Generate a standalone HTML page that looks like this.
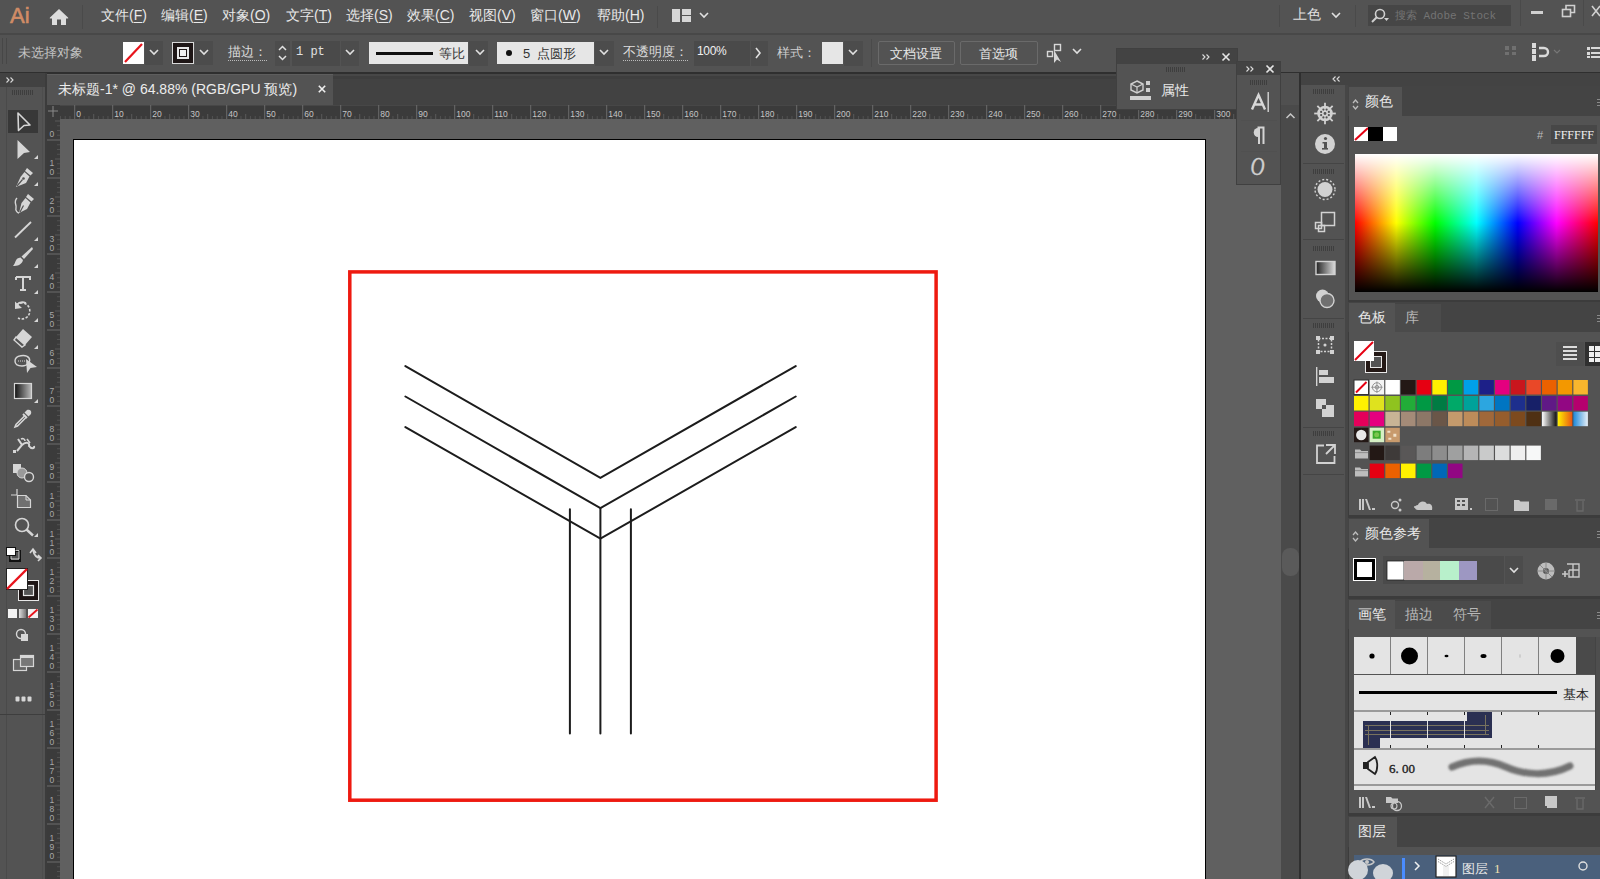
<!DOCTYPE html>
<html><head><meta charset="utf-8">
<style>
*{box-sizing:border-box;margin:0;padding:0}
html,body{width:1600px;height:879px;overflow:hidden;background:#535353;font-family:"Liberation Sans",sans-serif;color:#e6e6e6}
.a{position:absolute}
#menubar{left:0;top:0;width:1600px;height:33px;background:#535353}
.mi{position:absolute;top:7px;font-size:14px;color:#e8e8e8;white-space:nowrap}
.mi u{text-decoration:underline;text-underline-offset:2px;text-decoration-thickness:1px}
#ctrl{left:0;top:33px;width:1600px;height:41px;background:#535353;border-bottom:2px solid #2f2f2f}
#tools{left:0;top:73px;width:47px;height:806px;background:#535353;border-right:2px solid #3c3c3c}
#tabbar{left:47px;top:74px;width:1234px;height:31px;background:#424242;border-top:2px solid #474747;box-shadow:inset 0 3px 0 #3e3e3e}
#tab{left:47px;top:74px;width:286px;height:31px;background:#535353;border-top:1px solid #5e5e5e}
#hruler{left:47px;top:105px;width:1234px;height:14px;background:#3c3c3c}
#vruler{left:47px;top:105px;width:13px;height:774px;background:#3c3c3c}
#canvas{left:60px;top:119px;width:1221px;height:760px;background:#606060}
#artboard{left:73px;top:139px;width:1133px;height:740px;background:#fff;border:1px solid #000;border-bottom:none}
#vscroll{left:1281px;top:105px;width:19px;height:774px;background:#4a4a4a;border-right:1px solid #333}
#iconstrip{left:1301px;top:73px;width:45px;height:806px;background:#535353}
#rpanel{left:1348px;top:73px;width:252px;height:806px;background:#535353;border-left:1px solid #3a3a3a}
</style></head><body>
<div id="menubar" class="a">
  <div class="a" style="left:10px;top:3px;font-size:22px;color:#d08c66;-webkit-text-stroke:0.6px #d08c66;letter-spacing:0px">Ai</div>
  <div class="mi" style="left:101px">文件(<u>F</u>)</div>
  <div class="mi" style="left:161px">编辑(<u>E</u>)</div>
  <div class="mi" style="left:222px">对象(<u>O</u>)</div>
  <div class="mi" style="left:286px">文字(<u>T</u>)</div>
  <div class="mi" style="left:346px">选择(<u>S</u>)</div>
  <div class="mi" style="left:407px">效果(<u>C</u>)</div>
  <div class="mi" style="left:469px">视图(<u>V</u>)</div>
  <div class="mi" style="left:530px">窗口(<u>W</u>)</div>
  <div class="mi" style="left:597px">帮助(<u>H</u>)</div>

  <div class="a" style="left:48px;top:8px;width:22px;height:18px">
    <svg width="22" height="18" viewBox="0 0 22 18"><path d="M11 1 L2 9.5 Q1 10.5 2.5 10.5 H4 V17 H9 V11.5 H13 V17 H18 V10.5 H19.5 Q21 10.5 20 9.5 Z" fill="#dcdcdc"/></svg>
  </div>
  <div class="a" style="left:82px;top:5px;width:1px;height:24px;background:#4a4a4a"></div>
  <div class="a" style="left:657px;top:6px;width:1px;height:22px;background:#4a4a4a"></div>
  <div class="a" style="left:672px;top:9px;width:8px;height:13px;background:#d6d6d6"></div>
  <div class="a" style="left:682px;top:9px;width:9px;height:6px;background:#d6d6d6"></div>
  <div class="a" style="left:682px;top:16px;width:9px;height:6px;background:#d6d6d6"></div>
  <svg class="a" style="left:698px;top:11px" width="12" height="9" viewBox="0 0 12 9"><path d="M2 2 L6 6 L10 2" stroke="#e0e0e0" stroke-width="1.6" fill="none"/></svg>
  <div class="a" style="left:1279px;top:5px;width:1px;height:22px;background:#4a4a4a"></div>
  <div class="mi" style="left:1293px;top:6px;color:#e0e0e0">上色</div>
  <svg class="a" style="left:1330px;top:11px" width="12" height="9" viewBox="0 0 12 9"><path d="M2 2 L6 6 L10 2" stroke="#e0e0e0" stroke-width="1.6" fill="none"/></svg>
  <div class="a" style="left:1355px;top:5px;width:1px;height:22px;background:#4a4a4a"></div>
  <div class="a" style="left:1368px;top:5px;width:143px;height:21px;background:#464646"></div>
  <svg class="a" style="left:1370px;top:7px" width="22" height="17" viewBox="0 0 22 17"><circle cx="10" cy="7" r="4.5" stroke="#d0d0d0" stroke-width="1.6" fill="none"/><path d="M7 10 L2 15" stroke="#d0d0d0" stroke-width="2"/><path d="M14 11 L19 11 L16.5 14 Z" fill="#d0d0d0"/></svg>
  <div class="a" style="left:1395px;top:8px;font-size:11px;color:#747474;font-family:'Liberation Mono',monospace;white-space:nowrap">搜索 Adobe Stock</div>
  <div class="a" style="left:1520px;top:0px;width:1px;height:26px;background:#4a4a4a"></div>
  <div class="a" style="left:1531px;top:11px;width:12px;height:3px;background:#d0d0d0"></div>
  <svg class="a" style="left:1561px;top:4px" width="16" height="14" viewBox="0 0 16 14"><rect x="1.5" y="5.5" width="8" height="7" stroke="#d0d0d0" stroke-width="1.6" fill="none"/><path d="M5 5 V1.5 H13.5 V8.5 H10" stroke="#d0d0d0" stroke-width="1.6" fill="none"/></svg>
  <div class="a" style="left:1583px;top:0px;width:1px;height:26px;background:#4a4a4a"></div>
  <svg class="a" style="left:1591px;top:5px" width="10" height="12" viewBox="0 0 10 12"><path d="M1 1 L9 11 M9 1 L1 11" stroke="#d0d0d0" stroke-width="1.6"/></svg>
</div>
<div id="ctrl" class="a">
  <div class="a" style="left:2px;top:5px;width:1px;height:26px;background:#474747"></div>
  <div class="a" style="left:6px;top:5px;width:1px;height:26px;background:#474747"></div>
  <div class="a" style="left:18px;top:11px;font-size:13px;color:#c4c4c4;white-space:nowrap">未选择对象</div>
  <div class="a" style="left:123px;top:9px;width:21px;height:22px;background:#fff;overflow:hidden"><svg width="21" height="22"><path d="M2 20 L19 2" stroke="#e8141c" stroke-width="2.2"/></svg></div>
  <div class="a" style="left:145px;top:8px;width:18px;height:24px;background:#4c4c4c"></div>
  <svg class="a" style="left:148px;top:15px" width="12" height="9" viewBox="0 0 12 9"><path d="M2 2 L6 6 L10 2" stroke="#e0e0e0" stroke-width="1.6" fill="none"/></svg>
  <div class="a" style="left:172px;top:9px;width:22px;height:22px;background:#1e1616;border:1px solid #d8d8d8"></div>
  <div class="a" style="left:177px;top:14px;width:12px;height:12px;border:2px solid #e8e8e8;background:#1e1616"></div>
  <div class="a" style="left:180px;top:17px;width:6px;height:6px;background:#f0f0f0"></div>
  <div class="a" style="left:195px;top:8px;width:18px;height:24px;background:#4c4c4c"></div>
  <svg class="a" style="left:198px;top:15px" width="12" height="9" viewBox="0 0 12 9"><path d="M2 2 L6 6 L10 2" stroke="#e0e0e0" stroke-width="1.6" fill="none"/></svg>
  <div class="a" style="left:228px;top:11px;font-size:13px;color:#dcdcdc;white-space:nowrap;border-bottom:1px dotted #bbb;line-height:16px">描边：</div>
  <div class="a" style="left:275px;top:8px;width:15px;height:25px;background:#4c4c4c"></div>
  <svg class="a" style="left:276px;top:9px" width="13" height="22" viewBox="0 0 13 22"><path d="M3 8 L6.5 4.5 L10 8 M3 14 L6.5 17.5 L10 14" stroke="#e0e0e0" stroke-width="1.5" fill="none"/></svg>
  <div class="a" style="left:292px;top:8px;width:48px;height:25px;background:#4a4a4a"></div>
  <div class="a" style="left:296px;top:12px;font-size:12px;color:#e0e0e0;font-family:'Liberation Mono',monospace;white-space:nowrap">1 pt</div>
  <div class="a" style="left:341px;top:8px;width:18px;height:25px;background:#4c4c4c"></div>
  <svg class="a" style="left:344px;top:15px" width="12" height="9" viewBox="0 0 12 9"><path d="M2 2 L6 6 L10 2" stroke="#e0e0e0" stroke-width="1.6" fill="none"/></svg>
  <div class="a" style="left:369px;top:9px;width:99px;height:22px;background:#e6e6e6"></div>
  <div class="a" style="left:376px;top:19px;width:57px;height:3px;background:#111"></div>
  <div class="a" style="left:439px;top:12px;font-size:13px;color:#333;white-space:nowrap">等比</div>
  <div class="a" style="left:469px;top:8px;width:19px;height:25px;background:#4c4c4c"></div>
  <svg class="a" style="left:474px;top:15px" width="12" height="9" viewBox="0 0 12 9"><path d="M2 2 L6 6 L10 2" stroke="#e0e0e0" stroke-width="1.6" fill="none"/></svg>
  <div class="a" style="left:497px;top:9px;width:97px;height:22px;background:#e6e6e6"></div>
  <div class="a" style="left:506px;top:17px;width:6px;height:6px;border-radius:50%;background:#111"></div>
  <div class="a" style="left:523px;top:12px;font-size:13px;color:#333;white-space:nowrap">5&nbsp; 点圆形</div>
  <div class="a" style="left:595px;top:8px;width:19px;height:25px;background:#4c4c4c"></div>
  <svg class="a" style="left:598px;top:15px" width="12" height="9" viewBox="0 0 12 9"><path d="M2 2 L6 6 L10 2" stroke="#e0e0e0" stroke-width="1.6" fill="none"/></svg>
  <div class="a" style="left:623px;top:11px;font-size:13px;color:#dcdcdc;white-space:nowrap;border-bottom:1px dotted #bbb;line-height:16px">不透明度：</div>
  <div class="a" style="left:694px;top:8px;width:56px;height:25px;background:#4a4a4a"></div>
  <div class="a" style="left:697px;top:11px;font-size:12px;color:#f0f0f0;white-space:nowrap;letter-spacing:-0.3px">100%</div>
  <div class="a" style="left:751px;top:8px;width:17px;height:25px;background:#4c4c4c"></div>
  <svg class="a" style="left:754px;top:13px" width="9" height="14" viewBox="0 0 9 14"><path d="M2 2 L6 7 L2 12" stroke="#e0e0e0" stroke-width="1.6" fill="none"/></svg>
  <div class="a" style="left:777px;top:11px;font-size:13px;color:#d0d0d0;white-space:nowrap">样式：</div>
  <div class="a" style="left:822px;top:9px;width:21px;height:22px;background:#e6e6e6"></div>
  <div class="a" style="left:844px;top:8px;width:19px;height:25px;background:#4c4c4c"></div>
  <svg class="a" style="left:847px;top:15px" width="12" height="9" viewBox="0 0 12 9"><path d="M2 2 L6 6 L10 2" stroke="#e0e0e0" stroke-width="1.6" fill="none"/></svg>
  <div class="a" style="left:871px;top:6px;width:1px;height:28px;background:#4a4a4a"></div>
  <div class="a" style="left:878px;top:8px;width:77px;height:24px;border:1px solid #6a6a6a;border-radius:2px"></div>
  <div class="a" style="left:890px;top:12px;font-size:13px;color:#e6e6e6;white-space:nowrap">文档设置</div>
  <div class="a" style="left:960px;top:8px;width:78px;height:24px;border:1px solid #6a6a6a;border-radius:2px"></div>
  <div class="a" style="left:979px;top:12px;font-size:13px;color:#e6e6e6;white-space:nowrap">首选项</div>
  <svg class="a" style="left:1046px;top:9px" width="24" height="22" viewBox="0 0 24 22"><rect x="1.5" y="9.5" width="5" height="5" stroke="#d8d8d8" stroke-width="1.4" fill="none"/><rect x="8.5" y="2.5" width="6" height="6" stroke="#d8d8d8" stroke-width="1.4" fill="none"/><path d="M8 8 L8 21 L11 17.5 L15 20 Z" fill="#d8d8d8"/></svg>
  <svg class="a" style="left:1071px;top:14px" width="12" height="9" viewBox="0 0 12 9"><path d="M2 2 L6 6 L10 2" stroke="#e0e0e0" stroke-width="1.6" fill="none"/></svg>
  <svg class="a" style="left:1503px;top:9px" width="16" height="20" viewBox="0 0 16 20"><g fill="#707070"><rect x="2" y="4" width="4" height="4"/><rect x="9" y="4" width="4" height="4"/><rect x="2" y="10" width="4" height="3"/><rect x="9" y="10" width="4" height="3"/></g></svg>
  <svg class="a" style="left:1527px;top:8px" width="40" height="24" viewBox="0 0 40 24"><g fill="#dadada"><rect x="5" y="2" width="4" height="5"/><rect x="5" y="8" width="4" height="5"/><rect x="5" y="14" width="4" height="6"/></g><path d="M12 7 H17 A4 4 0 0 1 17 15 H12" stroke="#dadada" stroke-width="2.4" fill="none"/><path d="M27 9 L30 12 L33 9" stroke="#777" stroke-width="1.2" fill="none"/></svg>
  <svg class="a" style="left:1584px;top:10px" width="16" height="18" viewBox="0 0 16 18"><g fill="#dadada"><rect x="3" y="4" width="3" height="3"/><rect x="3" y="9" width="3" height="3"/><rect x="3" y="13" width="3" height="2"/><rect x="7" y="4" width="9" height="2"/><rect x="7" y="9" width="9" height="2"/><rect x="7" y="13" width="9" height="2"/></g></svg>
</div>
<div class="a" style="left:0;top:33px;width:1600px;height:2px;background:#484848;z-index:2"></div>
<div id="tools" class="a">
<svg width="47" height="806" viewBox="0 73 47 806" style="position:absolute;left:0;top:0">
  <rect x="0" y="73" width="45" height="14" fill="#424242"/>
  <path d="M6.5 77.5 L9 80 L6.5 82.5 M10.5 77.5 L13 80 L10.5 82.5" stroke="#d8d8d8" stroke-width="1.1" fill="none"/>
  <rect x="6" y="87" width="1" height="792" fill="#4a4a4a"/><rect x="42" y="87" width="1" height="792" fill="#4d4d4d"/>
  <g fill="#3e3e3e"><rect x="12" y="90" width="1" height="5"/><rect x="14" y="90" width="1" height="5"/><rect x="16" y="90" width="1" height="5"/><rect x="18" y="90" width="1" height="5"/><rect x="20" y="90" width="1" height="5"/><rect x="22" y="90" width="1" height="5"/><rect x="24" y="90" width="1" height="5"/><rect x="26" y="90" width="1" height="5"/><rect x="28" y="90" width="1" height="5"/><rect x="30" y="90" width="1" height="5"/><rect x="32" y="90" width="1" height="5"/></g>
  <rect x="0" y="714" width="45" height="1" fill="#3e3e3e"/>
  <rect x="8" y="110" width="30" height="23" fill="#383838"/>
  <path d="M18 113 L30 125 L24 125.5 L18.5 130.5 Z" stroke="#d6d6d6" stroke-width="1.6" fill="none" stroke-linejoin="round"/>
  <path d="M17.5 140 L30 152 L24 153 L17.5 159 Z" fill="#d6d6d6"/><path d="M38 155 L38 159 L34 159 Z" fill="#d6d6d6"/>
  <g transform="translate(14,167)"><path d="M13 1 L19 6 L16.5 8.5 L11 4 Z" fill="#d6d6d6"/><path d="M10.5 5 L15.5 9.5 L12 16 L2 20 L6.5 10 Z" fill="#d6d6d6"/><path d="M3 19 L8.5 12.5" stroke="#535353" stroke-width="1.2"/><circle cx="9.5" cy="11.5" r="1.3" fill="#535353"/></g><path d="M38 182 L38 186 L34 186 Z" fill="#d6d6d6"/>
  <g transform="translate(15,193)"><path d="M13 1 L19 6 L16.5 8.5 L11 4 Z" fill="#d6d6d6"/><path d="M10.5 5 L15.5 9.5 L12 16 L4 20 L6.5 10 Z" fill="#d6d6d6"/><path d="M5 19 L8.5 12.5" stroke="#535353" stroke-width="1.2"/><path d="M2 5 C-2 9 2 12 1 15 C0 18 3 20 4 20" stroke="#d6d6d6" stroke-width="1.4" fill="none"/></g>
  <path d="M15 237.5 L31 222" stroke="#d6d6d6" stroke-width="1.8"/><path d="M38 237 L38 241 L34 241 Z" fill="#d6d6d6"/>
  <g transform="translate(13,246)"><path d="M19 1 L20 3 L11 13 L8.5 10.5 Z" fill="#d6d6d6"/><path d="M7.5 11.5 L10 14 C9 19 4 20 0 20 C3 17 2 12 7.5 11.5 Z" fill="#d6d6d6"/></g><path d="M38 264 L38 268 L34 268 Z" fill="#d6d6d6"/>
  <path d="M16 277 H30 V280 M16 277 V280 M23 277 V290 M20 290 H26" stroke="#d6d6d6" stroke-width="2" fill="none"/><path d="M38 290 L38 294 L34 294 Z" fill="#d6d6d6"/>
  <path d="M16.5 305 A8 8 0 1 1 18 318" stroke="#d6d6d6" stroke-width="1.6" fill="none" stroke-dasharray="2.5 1.5"/><path d="M15 301.5 L15 309 L22 308 Z" fill="#d6d6d6"/><path d="M16.5 305 A8 8 0 0 1 26 303" stroke="#d6d6d6" stroke-width="1.8" fill="none"/><path d="M38 318 L38 322 L34 322 Z" fill="#d6d6d6"/>
  <g transform="translate(13,328)"><path d="M10 1 L19 9 L12 17 L3 9 Z" fill="#d6d6d6"/><path d="M3 9 L12 17 L9 19 L1 12 Z" stroke="#d6d6d6" stroke-width="1.4" fill="none"/></g><path d="M38 345 L38 349 L34 349 Z" fill="#d6d6d6"/>
  <g transform="translate(13,354)"><path d="M2 7 C2 1 13 0 16 4 C18 7 15 12 9 12 C4 12 2 10 2 7 Z" stroke="#d6d6d6" stroke-width="1.4" fill="none"/><path d="M5 7 H13" stroke="#d6d6d6" stroke-width="1" stroke-dasharray="1 1"/><path d="M13 5 L24 13 L17.5 14 L14 19 Z" fill="#d6d6d6"/></g>
  <defs><linearGradient id="tg" x1="0" x2="1" y1="0" y2="0"><stop offset="0" stop-color="#111"/><stop offset="1" stop-color="#bbb"/></linearGradient></defs>
  <rect x="14.5" y="383.5" width="17" height="15" fill="url(#tg)" stroke="#d6d6d6" stroke-width="1.2"/><path d="M38 399 L38 403 L34 403 Z" fill="#d6d6d6"/>
  <g transform="translate(13,409)"><path d="M14 1 C17 0 19 2 18 5 L15.5 7.5 L11.5 3.5 Z" fill="#d6d6d6"/><path d="M10 5 L14 9" stroke="#d6d6d6" stroke-width="2"/><path d="M11.5 7 L3 15.5 L2 18 L4.5 17 L13 8.5" stroke="#d6d6d6" stroke-width="1.5" fill="none"/></g>
  <g transform="translate(12,437)"><path d="M6 2 L10 8 L5 14 M10 8 C14 4 18 6 17 9 C19 12 23 12 22 9" stroke="#d6d6d6" stroke-width="2" fill="none"/><path d="M9 2 C11 1 13 2 13 4" stroke="#d6d6d6" stroke-width="1.6" fill="none"/><path d="M15 2 L18 6" stroke="#d6d6d6" stroke-width="1.6"/><rect x="1" y="13" width="3" height="3" fill="#d6d6d6"/></g>
  <g transform="translate(12,463)"><rect x="1" y="1" width="8" height="9" fill="#d6d6d6"/><circle cx="10" cy="10" r="5" fill="#9a9a9a" stroke="#d6d6d6" stroke-width="1"/><circle cx="17" cy="14" r="4.5" fill="#535353" stroke="#d6d6d6" stroke-width="1.4"/></g>
  <g transform="translate(10,489)"><path d="M7 0 V6 M1 6 H7" stroke="#d6d6d6" stroke-width="1.2"/><path d="M7.5 6.5 H16 L20.5 11 V18.5 H7.5 Z" fill="#707070" stroke="#d6d6d6" stroke-width="1.2"/><path d="M16 6.5 V11 H20.5" fill="none" stroke="#d6d6d6" stroke-width="1"/></g>
  <g transform="translate(14,517)"><circle cx="8" cy="8" r="6.5" stroke="#d6d6d6" stroke-width="1.6" fill="none"/><path d="M12.5 12.5 L19 18.5" stroke="#d6d6d6" stroke-width="2.4"/></g><path d="M38 533 L38 537 L34 537 Z" fill="#d6d6d6"/>
  <rect x="6.5" y="547.5" width="9" height="8" fill="#fff" stroke="#111" stroke-width="1"/>
  <path d="M16 551 H20 V561 H10 V556" stroke="#111" stroke-width="2" fill="none"/><path d="M15.5 550.5 H19 V559 H11 V556" stroke="#eee" stroke-width="0.8" fill="none"/>
  <path d="M30 553 L33 549 L36 553 M33 550 C34 556 37 558 41 558 M38 555 L41 558 L38 561" stroke="#d6d6d6" stroke-width="1.6" fill="none"/>
  <rect x="18.5" y="580.5" width="20" height="20" fill="#1c1414" stroke="#e8e8e8" stroke-width="1"/>
  <rect x="23.5" y="585.5" width="10" height="10" fill="#555" stroke="#e8e8e8" stroke-width="1.2"/>
  <rect x="6" y="568" width="22" height="22" fill="#fff"/><rect x="6.5" y="568.5" width="21" height="21" fill="none" stroke="#222" stroke-width="1"/>
  <path d="M7 589 L27 569" stroke="#e8141c" stroke-width="2.4"/>
  <rect x="8" y="609" width="9" height="9" fill="#f2f2f2"/>
  <defs><linearGradient id="tg2" x1="0" x2="1"><stop offset="0" stop-color="#ddd"/><stop offset="1" stop-color="#777"/></linearGradient></defs>
  <rect x="19" y="609" width="7" height="9" fill="url(#tg2)"/>
  <rect x="28" y="609" width="10" height="9" fill="#f2f2f2"/><path d="M28.5 617.5 L37.5 609.5" stroke="#e8141c" stroke-width="1.8"/>
  <g transform="translate(16,629)"><circle cx="5" cy="5" r="4.5" fill="none" stroke="#d6d6d6" stroke-width="1.4"/><rect x="5" y="5" width="7" height="7" fill="#d6d6d6"/></g>
  <g transform="translate(13,655)"><rect x="0.5" y="4.5" width="13" height="11" fill="#666" stroke="#d6d6d6" stroke-width="1.2"/><rect x="7.5" y="0.5" width="13" height="11" fill="#777" stroke="#d6d6d6" stroke-width="1.2"/><rect x="8" y="1" width="12" height="2" fill="#d6d6d6"/></g>
  <g fill="#d6d6d6"><rect x="15.5" y="696.5" width="4" height="5" rx="1"/><rect x="21.5" y="696.5" width="4" height="5" rx="1"/><rect x="27.5" y="696.5" width="4" height="5" rx="1"/></g>
</svg></div>
<div id="tabbar" class="a"></div>
<div id="tab" class="a">
  <div class="a" style="left:11px;top:6px;font-size:14px;color:#ececec;white-space:nowrap">未标题-1* @ 64.88% (RGB/GPU 预览)</div>
  <svg class="a" style="left:271px;top:10px" width="8" height="8" viewBox="0 0 8 8"><path d="M0.8 0.8 L7.2 7.2 M7.2 0.8 L0.8 7.2" stroke="#f0f0f0" stroke-width="1.6"/></svg>
</div>
<svg class="a" style="left:47px;top:105px" width="1234" height="14"><rect width="1234" height="14" fill="#3b3b3b"/><rect x="0" y="0" width="1234" height="1" fill="#474747"/><rect x="12.95" y="11" width="1" height="3" fill="#525252"/><rect x="17.70" y="11" width="1" height="3" fill="#525252"/><rect x="22.45" y="11" width="1" height="3" fill="#525252"/><rect x="27.20" y="0" width="1" height="14" fill="#6c6c6c"/><rect x="31.95" y="11" width="1" height="3" fill="#525252"/><rect x="36.70" y="11" width="1" height="3" fill="#525252"/><rect x="41.45" y="11" width="1" height="3" fill="#525252"/><rect x="46.20" y="9" width="1" height="5" fill="#5a5a5a"/><rect x="50.95" y="11" width="1" height="3" fill="#525252"/><rect x="55.70" y="11" width="1" height="3" fill="#525252"/><rect x="60.45" y="11" width="1" height="3" fill="#525252"/><rect x="65.20" y="0" width="1" height="14" fill="#6c6c6c"/><rect x="69.95" y="11" width="1" height="3" fill="#525252"/><rect x="74.70" y="11" width="1" height="3" fill="#525252"/><rect x="79.45" y="11" width="1" height="3" fill="#525252"/><rect x="84.20" y="9" width="1" height="5" fill="#5a5a5a"/><rect x="88.95" y="11" width="1" height="3" fill="#525252"/><rect x="93.70" y="11" width="1" height="3" fill="#525252"/><rect x="98.45" y="11" width="1" height="3" fill="#525252"/><rect x="103.20" y="0" width="1" height="14" fill="#6c6c6c"/><rect x="107.95" y="11" width="1" height="3" fill="#525252"/><rect x="112.70" y="11" width="1" height="3" fill="#525252"/><rect x="117.45" y="11" width="1" height="3" fill="#525252"/><rect x="122.20" y="9" width="1" height="5" fill="#5a5a5a"/><rect x="126.95" y="11" width="1" height="3" fill="#525252"/><rect x="131.70" y="11" width="1" height="3" fill="#525252"/><rect x="136.45" y="11" width="1" height="3" fill="#525252"/><rect x="141.20" y="0" width="1" height="14" fill="#6c6c6c"/><rect x="145.95" y="11" width="1" height="3" fill="#525252"/><rect x="150.70" y="11" width="1" height="3" fill="#525252"/><rect x="155.45" y="11" width="1" height="3" fill="#525252"/><rect x="160.20" y="9" width="1" height="5" fill="#5a5a5a"/><rect x="164.95" y="11" width="1" height="3" fill="#525252"/><rect x="169.70" y="11" width="1" height="3" fill="#525252"/><rect x="174.45" y="11" width="1" height="3" fill="#525252"/><rect x="179.20" y="0" width="1" height="14" fill="#6c6c6c"/><rect x="183.95" y="11" width="1" height="3" fill="#525252"/><rect x="188.70" y="11" width="1" height="3" fill="#525252"/><rect x="193.45" y="11" width="1" height="3" fill="#525252"/><rect x="198.20" y="9" width="1" height="5" fill="#5a5a5a"/><rect x="202.95" y="11" width="1" height="3" fill="#525252"/><rect x="207.70" y="11" width="1" height="3" fill="#525252"/><rect x="212.45" y="11" width="1" height="3" fill="#525252"/><rect x="217.20" y="0" width="1" height="14" fill="#6c6c6c"/><rect x="221.95" y="11" width="1" height="3" fill="#525252"/><rect x="226.70" y="11" width="1" height="3" fill="#525252"/><rect x="231.45" y="11" width="1" height="3" fill="#525252"/><rect x="236.20" y="9" width="1" height="5" fill="#5a5a5a"/><rect x="240.95" y="11" width="1" height="3" fill="#525252"/><rect x="245.70" y="11" width="1" height="3" fill="#525252"/><rect x="250.45" y="11" width="1" height="3" fill="#525252"/><rect x="255.20" y="0" width="1" height="14" fill="#6c6c6c"/><rect x="259.95" y="11" width="1" height="3" fill="#525252"/><rect x="264.70" y="11" width="1" height="3" fill="#525252"/><rect x="269.45" y="11" width="1" height="3" fill="#525252"/><rect x="274.20" y="9" width="1" height="5" fill="#5a5a5a"/><rect x="278.95" y="11" width="1" height="3" fill="#525252"/><rect x="283.70" y="11" width="1" height="3" fill="#525252"/><rect x="288.45" y="11" width="1" height="3" fill="#525252"/><rect x="293.20" y="0" width="1" height="14" fill="#6c6c6c"/><rect x="297.95" y="11" width="1" height="3" fill="#525252"/><rect x="302.70" y="11" width="1" height="3" fill="#525252"/><rect x="307.45" y="11" width="1" height="3" fill="#525252"/><rect x="312.20" y="9" width="1" height="5" fill="#5a5a5a"/><rect x="316.95" y="11" width="1" height="3" fill="#525252"/><rect x="321.70" y="11" width="1" height="3" fill="#525252"/><rect x="326.45" y="11" width="1" height="3" fill="#525252"/><rect x="331.20" y="0" width="1" height="14" fill="#6c6c6c"/><rect x="335.95" y="11" width="1" height="3" fill="#525252"/><rect x="340.70" y="11" width="1" height="3" fill="#525252"/><rect x="345.45" y="11" width="1" height="3" fill="#525252"/><rect x="350.20" y="9" width="1" height="5" fill="#5a5a5a"/><rect x="354.95" y="11" width="1" height="3" fill="#525252"/><rect x="359.70" y="11" width="1" height="3" fill="#525252"/><rect x="364.45" y="11" width="1" height="3" fill="#525252"/><rect x="369.20" y="0" width="1" height="14" fill="#6c6c6c"/><rect x="373.95" y="11" width="1" height="3" fill="#525252"/><rect x="378.70" y="11" width="1" height="3" fill="#525252"/><rect x="383.45" y="11" width="1" height="3" fill="#525252"/><rect x="388.20" y="9" width="1" height="5" fill="#5a5a5a"/><rect x="392.95" y="11" width="1" height="3" fill="#525252"/><rect x="397.70" y="11" width="1" height="3" fill="#525252"/><rect x="402.45" y="11" width="1" height="3" fill="#525252"/><rect x="407.20" y="0" width="1" height="14" fill="#6c6c6c"/><rect x="411.95" y="11" width="1" height="3" fill="#525252"/><rect x="416.70" y="11" width="1" height="3" fill="#525252"/><rect x="421.45" y="11" width="1" height="3" fill="#525252"/><rect x="426.20" y="9" width="1" height="5" fill="#5a5a5a"/><rect x="430.95" y="11" width="1" height="3" fill="#525252"/><rect x="435.70" y="11" width="1" height="3" fill="#525252"/><rect x="440.45" y="11" width="1" height="3" fill="#525252"/><rect x="445.20" y="0" width="1" height="14" fill="#6c6c6c"/><rect x="449.95" y="11" width="1" height="3" fill="#525252"/><rect x="454.70" y="11" width="1" height="3" fill="#525252"/><rect x="459.45" y="11" width="1" height="3" fill="#525252"/><rect x="464.20" y="9" width="1" height="5" fill="#5a5a5a"/><rect x="468.95" y="11" width="1" height="3" fill="#525252"/><rect x="473.70" y="11" width="1" height="3" fill="#525252"/><rect x="478.45" y="11" width="1" height="3" fill="#525252"/><rect x="483.20" y="0" width="1" height="14" fill="#6c6c6c"/><rect x="487.95" y="11" width="1" height="3" fill="#525252"/><rect x="492.70" y="11" width="1" height="3" fill="#525252"/><rect x="497.45" y="11" width="1" height="3" fill="#525252"/><rect x="502.20" y="9" width="1" height="5" fill="#5a5a5a"/><rect x="506.95" y="11" width="1" height="3" fill="#525252"/><rect x="511.70" y="11" width="1" height="3" fill="#525252"/><rect x="516.45" y="11" width="1" height="3" fill="#525252"/><rect x="521.20" y="0" width="1" height="14" fill="#6c6c6c"/><rect x="525.95" y="11" width="1" height="3" fill="#525252"/><rect x="530.70" y="11" width="1" height="3" fill="#525252"/><rect x="535.45" y="11" width="1" height="3" fill="#525252"/><rect x="540.20" y="9" width="1" height="5" fill="#5a5a5a"/><rect x="544.95" y="11" width="1" height="3" fill="#525252"/><rect x="549.70" y="11" width="1" height="3" fill="#525252"/><rect x="554.45" y="11" width="1" height="3" fill="#525252"/><rect x="559.20" y="0" width="1" height="14" fill="#6c6c6c"/><rect x="563.95" y="11" width="1" height="3" fill="#525252"/><rect x="568.70" y="11" width="1" height="3" fill="#525252"/><rect x="573.45" y="11" width="1" height="3" fill="#525252"/><rect x="578.20" y="9" width="1" height="5" fill="#5a5a5a"/><rect x="582.95" y="11" width="1" height="3" fill="#525252"/><rect x="587.70" y="11" width="1" height="3" fill="#525252"/><rect x="592.45" y="11" width="1" height="3" fill="#525252"/><rect x="597.20" y="0" width="1" height="14" fill="#6c6c6c"/><rect x="601.95" y="11" width="1" height="3" fill="#525252"/><rect x="606.70" y="11" width="1" height="3" fill="#525252"/><rect x="611.45" y="11" width="1" height="3" fill="#525252"/><rect x="616.20" y="9" width="1" height="5" fill="#5a5a5a"/><rect x="620.95" y="11" width="1" height="3" fill="#525252"/><rect x="625.70" y="11" width="1" height="3" fill="#525252"/><rect x="630.45" y="11" width="1" height="3" fill="#525252"/><rect x="635.20" y="0" width="1" height="14" fill="#6c6c6c"/><rect x="639.95" y="11" width="1" height="3" fill="#525252"/><rect x="644.70" y="11" width="1" height="3" fill="#525252"/><rect x="649.45" y="11" width="1" height="3" fill="#525252"/><rect x="654.20" y="9" width="1" height="5" fill="#5a5a5a"/><rect x="658.95" y="11" width="1" height="3" fill="#525252"/><rect x="663.70" y="11" width="1" height="3" fill="#525252"/><rect x="668.45" y="11" width="1" height="3" fill="#525252"/><rect x="673.20" y="0" width="1" height="14" fill="#6c6c6c"/><rect x="677.95" y="11" width="1" height="3" fill="#525252"/><rect x="682.70" y="11" width="1" height="3" fill="#525252"/><rect x="687.45" y="11" width="1" height="3" fill="#525252"/><rect x="692.20" y="9" width="1" height="5" fill="#5a5a5a"/><rect x="696.95" y="11" width="1" height="3" fill="#525252"/><rect x="701.70" y="11" width="1" height="3" fill="#525252"/><rect x="706.45" y="11" width="1" height="3" fill="#525252"/><rect x="711.20" y="0" width="1" height="14" fill="#6c6c6c"/><rect x="715.95" y="11" width="1" height="3" fill="#525252"/><rect x="720.70" y="11" width="1" height="3" fill="#525252"/><rect x="725.45" y="11" width="1" height="3" fill="#525252"/><rect x="730.20" y="9" width="1" height="5" fill="#5a5a5a"/><rect x="734.95" y="11" width="1" height="3" fill="#525252"/><rect x="739.70" y="11" width="1" height="3" fill="#525252"/><rect x="744.45" y="11" width="1" height="3" fill="#525252"/><rect x="749.20" y="0" width="1" height="14" fill="#6c6c6c"/><rect x="753.95" y="11" width="1" height="3" fill="#525252"/><rect x="758.70" y="11" width="1" height="3" fill="#525252"/><rect x="763.45" y="11" width="1" height="3" fill="#525252"/><rect x="768.20" y="9" width="1" height="5" fill="#5a5a5a"/><rect x="772.95" y="11" width="1" height="3" fill="#525252"/><rect x="777.70" y="11" width="1" height="3" fill="#525252"/><rect x="782.45" y="11" width="1" height="3" fill="#525252"/><rect x="787.20" y="0" width="1" height="14" fill="#6c6c6c"/><rect x="791.95" y="11" width="1" height="3" fill="#525252"/><rect x="796.70" y="11" width="1" height="3" fill="#525252"/><rect x="801.45" y="11" width="1" height="3" fill="#525252"/><rect x="806.20" y="9" width="1" height="5" fill="#5a5a5a"/><rect x="810.95" y="11" width="1" height="3" fill="#525252"/><rect x="815.70" y="11" width="1" height="3" fill="#525252"/><rect x="820.45" y="11" width="1" height="3" fill="#525252"/><rect x="825.20" y="0" width="1" height="14" fill="#6c6c6c"/><rect x="829.95" y="11" width="1" height="3" fill="#525252"/><rect x="834.70" y="11" width="1" height="3" fill="#525252"/><rect x="839.45" y="11" width="1" height="3" fill="#525252"/><rect x="844.20" y="9" width="1" height="5" fill="#5a5a5a"/><rect x="848.95" y="11" width="1" height="3" fill="#525252"/><rect x="853.70" y="11" width="1" height="3" fill="#525252"/><rect x="858.45" y="11" width="1" height="3" fill="#525252"/><rect x="863.20" y="0" width="1" height="14" fill="#6c6c6c"/><rect x="867.95" y="11" width="1" height="3" fill="#525252"/><rect x="872.70" y="11" width="1" height="3" fill="#525252"/><rect x="877.45" y="11" width="1" height="3" fill="#525252"/><rect x="882.20" y="9" width="1" height="5" fill="#5a5a5a"/><rect x="886.95" y="11" width="1" height="3" fill="#525252"/><rect x="891.70" y="11" width="1" height="3" fill="#525252"/><rect x="896.45" y="11" width="1" height="3" fill="#525252"/><rect x="901.20" y="0" width="1" height="14" fill="#6c6c6c"/><rect x="905.95" y="11" width="1" height="3" fill="#525252"/><rect x="910.70" y="11" width="1" height="3" fill="#525252"/><rect x="915.45" y="11" width="1" height="3" fill="#525252"/><rect x="920.20" y="9" width="1" height="5" fill="#5a5a5a"/><rect x="924.95" y="11" width="1" height="3" fill="#525252"/><rect x="929.70" y="11" width="1" height="3" fill="#525252"/><rect x="934.45" y="11" width="1" height="3" fill="#525252"/><rect x="939.20" y="0" width="1" height="14" fill="#6c6c6c"/><rect x="943.95" y="11" width="1" height="3" fill="#525252"/><rect x="948.70" y="11" width="1" height="3" fill="#525252"/><rect x="953.45" y="11" width="1" height="3" fill="#525252"/><rect x="958.20" y="9" width="1" height="5" fill="#5a5a5a"/><rect x="962.95" y="11" width="1" height="3" fill="#525252"/><rect x="967.70" y="11" width="1" height="3" fill="#525252"/><rect x="972.45" y="11" width="1" height="3" fill="#525252"/><rect x="977.20" y="0" width="1" height="14" fill="#6c6c6c"/><rect x="981.95" y="11" width="1" height="3" fill="#525252"/><rect x="986.70" y="11" width="1" height="3" fill="#525252"/><rect x="991.45" y="11" width="1" height="3" fill="#525252"/><rect x="996.20" y="9" width="1" height="5" fill="#5a5a5a"/><rect x="1000.95" y="11" width="1" height="3" fill="#525252"/><rect x="1005.70" y="11" width="1" height="3" fill="#525252"/><rect x="1010.45" y="11" width="1" height="3" fill="#525252"/><rect x="1015.20" y="0" width="1" height="14" fill="#6c6c6c"/><rect x="1019.95" y="11" width="1" height="3" fill="#525252"/><rect x="1024.70" y="11" width="1" height="3" fill="#525252"/><rect x="1029.45" y="11" width="1" height="3" fill="#525252"/><rect x="1034.20" y="9" width="1" height="5" fill="#5a5a5a"/><rect x="1038.95" y="11" width="1" height="3" fill="#525252"/><rect x="1043.70" y="11" width="1" height="3" fill="#525252"/><rect x="1048.45" y="11" width="1" height="3" fill="#525252"/><rect x="1053.20" y="0" width="1" height="14" fill="#6c6c6c"/><rect x="1057.95" y="11" width="1" height="3" fill="#525252"/><rect x="1062.70" y="11" width="1" height="3" fill="#525252"/><rect x="1067.45" y="11" width="1" height="3" fill="#525252"/><rect x="1072.20" y="9" width="1" height="5" fill="#5a5a5a"/><rect x="1076.95" y="11" width="1" height="3" fill="#525252"/><rect x="1081.70" y="11" width="1" height="3" fill="#525252"/><rect x="1086.45" y="11" width="1" height="3" fill="#525252"/><rect x="1091.20" y="0" width="1" height="14" fill="#6c6c6c"/><rect x="1095.95" y="11" width="1" height="3" fill="#525252"/><rect x="1100.70" y="11" width="1" height="3" fill="#525252"/><rect x="1105.45" y="11" width="1" height="3" fill="#525252"/><rect x="1110.20" y="9" width="1" height="5" fill="#5a5a5a"/><rect x="1114.95" y="11" width="1" height="3" fill="#525252"/><rect x="1119.70" y="11" width="1" height="3" fill="#525252"/><rect x="1124.45" y="11" width="1" height="3" fill="#525252"/><rect x="1129.20" y="0" width="1" height="14" fill="#6c6c6c"/><rect x="1133.95" y="11" width="1" height="3" fill="#525252"/><rect x="1138.70" y="11" width="1" height="3" fill="#525252"/><rect x="1143.45" y="11" width="1" height="3" fill="#525252"/><rect x="1148.20" y="9" width="1" height="5" fill="#5a5a5a"/><rect x="1152.95" y="11" width="1" height="3" fill="#525252"/><rect x="1157.70" y="11" width="1" height="3" fill="#525252"/><rect x="1162.45" y="11" width="1" height="3" fill="#525252"/><rect x="1167.20" y="0" width="1" height="14" fill="#6c6c6c"/><rect x="1171.95" y="11" width="1" height="3" fill="#525252"/><rect x="1176.70" y="11" width="1" height="3" fill="#525252"/><rect x="1181.45" y="11" width="1" height="3" fill="#525252"/><rect x="1186.20" y="9" width="1" height="5" fill="#5a5a5a"/><rect x="1190.95" y="11" width="1" height="3" fill="#525252"/><rect x="1195.70" y="11" width="1" height="3" fill="#525252"/><rect x="1200.45" y="11" width="1" height="3" fill="#525252"/><rect x="1205.20" y="0" width="1" height="14" fill="#6c6c6c"/><rect x="1209.95" y="11" width="1" height="3" fill="#525252"/><rect x="1214.70" y="11" width="1" height="3" fill="#525252"/><rect x="1219.45" y="11" width="1" height="3" fill="#525252"/><rect x="1224.20" y="9" width="1" height="5" fill="#5a5a5a"/><rect x="1228.95" y="11" width="1" height="3" fill="#525252"/><rect x="1233.70" y="11" width="1" height="3" fill="#525252"/><g font-family="Liberation Sans, sans-serif" font-size="8.5" fill="#c4c4c4"><text x="29.20" y="12">0</text><text x="67.20" y="12">10</text><text x="105.20" y="12">20</text><text x="143.20" y="12">30</text><text x="181.20" y="12">40</text><text x="219.20" y="12">50</text><text x="257.20" y="12">60</text><text x="295.20" y="12">70</text><text x="333.20" y="12">80</text><text x="371.20" y="12">90</text><text x="409.20" y="12">100</text><text x="447.20" y="12">110</text><text x="485.20" y="12">120</text><text x="523.20" y="12">130</text><text x="561.20" y="12">140</text><text x="599.20" y="12">150</text><text x="637.20" y="12">160</text><text x="675.20" y="12">170</text><text x="713.20" y="12">180</text><text x="751.20" y="12">190</text><text x="789.20" y="12">200</text><text x="827.20" y="12">210</text><text x="865.20" y="12">220</text><text x="903.20" y="12">230</text><text x="941.20" y="12">240</text><text x="979.20" y="12">250</text><text x="1017.20" y="12">260</text><text x="1055.20" y="12">270</text><text x="1093.20" y="12">280</text><text x="1131.20" y="12">290</text><text x="1169.20" y="12">300</text><text x="1207.20" y="12">310</text></g></svg>
<svg class="a" style="left:47px;top:105px" width="13" height="774"><rect width="13" height="774" fill="#3b3b3b"/><rect x="8" y="15.50" width="5" height="1" fill="#5a5a5a"/><rect x="10" y="20.25" width="3" height="1" fill="#525252"/><rect x="10" y="25.00" width="3" height="1" fill="#525252"/><rect x="10" y="29.75" width="3" height="1" fill="#525252"/><rect x="0" y="34.50" width="13" height="1" fill="#6c6c6c"/><rect x="10" y="39.25" width="3" height="1" fill="#525252"/><rect x="10" y="44.00" width="3" height="1" fill="#525252"/><rect x="10" y="48.75" width="3" height="1" fill="#525252"/><rect x="8" y="53.50" width="5" height="1" fill="#5a5a5a"/><rect x="10" y="58.25" width="3" height="1" fill="#525252"/><rect x="10" y="63.00" width="3" height="1" fill="#525252"/><rect x="10" y="67.75" width="3" height="1" fill="#525252"/><rect x="0" y="72.50" width="13" height="1" fill="#6c6c6c"/><rect x="10" y="77.25" width="3" height="1" fill="#525252"/><rect x="10" y="82.00" width="3" height="1" fill="#525252"/><rect x="10" y="86.75" width="3" height="1" fill="#525252"/><rect x="8" y="91.50" width="5" height="1" fill="#5a5a5a"/><rect x="10" y="96.25" width="3" height="1" fill="#525252"/><rect x="10" y="101.00" width="3" height="1" fill="#525252"/><rect x="10" y="105.75" width="3" height="1" fill="#525252"/><rect x="0" y="110.50" width="13" height="1" fill="#6c6c6c"/><rect x="10" y="115.25" width="3" height="1" fill="#525252"/><rect x="10" y="120.00" width="3" height="1" fill="#525252"/><rect x="10" y="124.75" width="3" height="1" fill="#525252"/><rect x="8" y="129.50" width="5" height="1" fill="#5a5a5a"/><rect x="10" y="134.25" width="3" height="1" fill="#525252"/><rect x="10" y="139.00" width="3" height="1" fill="#525252"/><rect x="10" y="143.75" width="3" height="1" fill="#525252"/><rect x="0" y="148.50" width="13" height="1" fill="#6c6c6c"/><rect x="10" y="153.25" width="3" height="1" fill="#525252"/><rect x="10" y="158.00" width="3" height="1" fill="#525252"/><rect x="10" y="162.75" width="3" height="1" fill="#525252"/><rect x="8" y="167.50" width="5" height="1" fill="#5a5a5a"/><rect x="10" y="172.25" width="3" height="1" fill="#525252"/><rect x="10" y="177.00" width="3" height="1" fill="#525252"/><rect x="10" y="181.75" width="3" height="1" fill="#525252"/><rect x="0" y="186.50" width="13" height="1" fill="#6c6c6c"/><rect x="10" y="191.25" width="3" height="1" fill="#525252"/><rect x="10" y="196.00" width="3" height="1" fill="#525252"/><rect x="10" y="200.75" width="3" height="1" fill="#525252"/><rect x="8" y="205.50" width="5" height="1" fill="#5a5a5a"/><rect x="10" y="210.25" width="3" height="1" fill="#525252"/><rect x="10" y="215.00" width="3" height="1" fill="#525252"/><rect x="10" y="219.75" width="3" height="1" fill="#525252"/><rect x="0" y="224.50" width="13" height="1" fill="#6c6c6c"/><rect x="10" y="229.25" width="3" height="1" fill="#525252"/><rect x="10" y="234.00" width="3" height="1" fill="#525252"/><rect x="10" y="238.75" width="3" height="1" fill="#525252"/><rect x="8" y="243.50" width="5" height="1" fill="#5a5a5a"/><rect x="10" y="248.25" width="3" height="1" fill="#525252"/><rect x="10" y="253.00" width="3" height="1" fill="#525252"/><rect x="10" y="257.75" width="3" height="1" fill="#525252"/><rect x="0" y="262.50" width="13" height="1" fill="#6c6c6c"/><rect x="10" y="267.25" width="3" height="1" fill="#525252"/><rect x="10" y="272.00" width="3" height="1" fill="#525252"/><rect x="10" y="276.75" width="3" height="1" fill="#525252"/><rect x="8" y="281.50" width="5" height="1" fill="#5a5a5a"/><rect x="10" y="286.25" width="3" height="1" fill="#525252"/><rect x="10" y="291.00" width="3" height="1" fill="#525252"/><rect x="10" y="295.75" width="3" height="1" fill="#525252"/><rect x="0" y="300.50" width="13" height="1" fill="#6c6c6c"/><rect x="10" y="305.25" width="3" height="1" fill="#525252"/><rect x="10" y="310.00" width="3" height="1" fill="#525252"/><rect x="10" y="314.75" width="3" height="1" fill="#525252"/><rect x="8" y="319.50" width="5" height="1" fill="#5a5a5a"/><rect x="10" y="324.25" width="3" height="1" fill="#525252"/><rect x="10" y="329.00" width="3" height="1" fill="#525252"/><rect x="10" y="333.75" width="3" height="1" fill="#525252"/><rect x="0" y="338.50" width="13" height="1" fill="#6c6c6c"/><rect x="10" y="343.25" width="3" height="1" fill="#525252"/><rect x="10" y="348.00" width="3" height="1" fill="#525252"/><rect x="10" y="352.75" width="3" height="1" fill="#525252"/><rect x="8" y="357.50" width="5" height="1" fill="#5a5a5a"/><rect x="10" y="362.25" width="3" height="1" fill="#525252"/><rect x="10" y="367.00" width="3" height="1" fill="#525252"/><rect x="10" y="371.75" width="3" height="1" fill="#525252"/><rect x="0" y="376.50" width="13" height="1" fill="#6c6c6c"/><rect x="10" y="381.25" width="3" height="1" fill="#525252"/><rect x="10" y="386.00" width="3" height="1" fill="#525252"/><rect x="10" y="390.75" width="3" height="1" fill="#525252"/><rect x="8" y="395.50" width="5" height="1" fill="#5a5a5a"/><rect x="10" y="400.25" width="3" height="1" fill="#525252"/><rect x="10" y="405.00" width="3" height="1" fill="#525252"/><rect x="10" y="409.75" width="3" height="1" fill="#525252"/><rect x="0" y="414.50" width="13" height="1" fill="#6c6c6c"/><rect x="10" y="419.25" width="3" height="1" fill="#525252"/><rect x="10" y="424.00" width="3" height="1" fill="#525252"/><rect x="10" y="428.75" width="3" height="1" fill="#525252"/><rect x="8" y="433.50" width="5" height="1" fill="#5a5a5a"/><rect x="10" y="438.25" width="3" height="1" fill="#525252"/><rect x="10" y="443.00" width="3" height="1" fill="#525252"/><rect x="10" y="447.75" width="3" height="1" fill="#525252"/><rect x="0" y="452.50" width="13" height="1" fill="#6c6c6c"/><rect x="10" y="457.25" width="3" height="1" fill="#525252"/><rect x="10" y="462.00" width="3" height="1" fill="#525252"/><rect x="10" y="466.75" width="3" height="1" fill="#525252"/><rect x="8" y="471.50" width="5" height="1" fill="#5a5a5a"/><rect x="10" y="476.25" width="3" height="1" fill="#525252"/><rect x="10" y="481.00" width="3" height="1" fill="#525252"/><rect x="10" y="485.75" width="3" height="1" fill="#525252"/><rect x="0" y="490.50" width="13" height="1" fill="#6c6c6c"/><rect x="10" y="495.25" width="3" height="1" fill="#525252"/><rect x="10" y="500.00" width="3" height="1" fill="#525252"/><rect x="10" y="504.75" width="3" height="1" fill="#525252"/><rect x="8" y="509.50" width="5" height="1" fill="#5a5a5a"/><rect x="10" y="514.25" width="3" height="1" fill="#525252"/><rect x="10" y="519.00" width="3" height="1" fill="#525252"/><rect x="10" y="523.75" width="3" height="1" fill="#525252"/><rect x="0" y="528.50" width="13" height="1" fill="#6c6c6c"/><rect x="10" y="533.25" width="3" height="1" fill="#525252"/><rect x="10" y="538.00" width="3" height="1" fill="#525252"/><rect x="10" y="542.75" width="3" height="1" fill="#525252"/><rect x="8" y="547.50" width="5" height="1" fill="#5a5a5a"/><rect x="10" y="552.25" width="3" height="1" fill="#525252"/><rect x="10" y="557.00" width="3" height="1" fill="#525252"/><rect x="10" y="561.75" width="3" height="1" fill="#525252"/><rect x="0" y="566.50" width="13" height="1" fill="#6c6c6c"/><rect x="10" y="571.25" width="3" height="1" fill="#525252"/><rect x="10" y="576.00" width="3" height="1" fill="#525252"/><rect x="10" y="580.75" width="3" height="1" fill="#525252"/><rect x="8" y="585.50" width="5" height="1" fill="#5a5a5a"/><rect x="10" y="590.25" width="3" height="1" fill="#525252"/><rect x="10" y="595.00" width="3" height="1" fill="#525252"/><rect x="10" y="599.75" width="3" height="1" fill="#525252"/><rect x="0" y="604.50" width="13" height="1" fill="#6c6c6c"/><rect x="10" y="609.25" width="3" height="1" fill="#525252"/><rect x="10" y="614.00" width="3" height="1" fill="#525252"/><rect x="10" y="618.75" width="3" height="1" fill="#525252"/><rect x="8" y="623.50" width="5" height="1" fill="#5a5a5a"/><rect x="10" y="628.25" width="3" height="1" fill="#525252"/><rect x="10" y="633.00" width="3" height="1" fill="#525252"/><rect x="10" y="637.75" width="3" height="1" fill="#525252"/><rect x="0" y="642.50" width="13" height="1" fill="#6c6c6c"/><rect x="10" y="647.25" width="3" height="1" fill="#525252"/><rect x="10" y="652.00" width="3" height="1" fill="#525252"/><rect x="10" y="656.75" width="3" height="1" fill="#525252"/><rect x="8" y="661.50" width="5" height="1" fill="#5a5a5a"/><rect x="10" y="666.25" width="3" height="1" fill="#525252"/><rect x="10" y="671.00" width="3" height="1" fill="#525252"/><rect x="10" y="675.75" width="3" height="1" fill="#525252"/><rect x="0" y="680.50" width="13" height="1" fill="#6c6c6c"/><rect x="10" y="685.25" width="3" height="1" fill="#525252"/><rect x="10" y="690.00" width="3" height="1" fill="#525252"/><rect x="10" y="694.75" width="3" height="1" fill="#525252"/><rect x="8" y="699.50" width="5" height="1" fill="#5a5a5a"/><rect x="10" y="704.25" width="3" height="1" fill="#525252"/><rect x="10" y="709.00" width="3" height="1" fill="#525252"/><rect x="10" y="713.75" width="3" height="1" fill="#525252"/><rect x="0" y="718.50" width="13" height="1" fill="#6c6c6c"/><rect x="10" y="723.25" width="3" height="1" fill="#525252"/><rect x="10" y="728.00" width="3" height="1" fill="#525252"/><rect x="10" y="732.75" width="3" height="1" fill="#525252"/><rect x="8" y="737.50" width="5" height="1" fill="#5a5a5a"/><rect x="10" y="742.25" width="3" height="1" fill="#525252"/><rect x="10" y="747.00" width="3" height="1" fill="#525252"/><rect x="10" y="751.75" width="3" height="1" fill="#525252"/><rect x="0" y="756.50" width="13" height="1" fill="#6c6c6c"/><rect x="10" y="761.25" width="3" height="1" fill="#525252"/><rect x="10" y="766.00" width="3" height="1" fill="#525252"/><rect x="10" y="770.75" width="3" height="1" fill="#525252"/><g font-family="Liberation Sans, sans-serif" font-size="8.5" fill="#a8a8a8"><text x="2.5" y="32.00">0</text><text x="2.5" y="61.00">1</text><text x="2.5" y="70.00">0</text><text x="2.5" y="99.00">2</text><text x="2.5" y="108.00">0</text><text x="2.5" y="137.00">3</text><text x="2.5" y="146.00">0</text><text x="2.5" y="175.00">4</text><text x="2.5" y="184.00">0</text><text x="2.5" y="213.00">5</text><text x="2.5" y="222.00">0</text><text x="2.5" y="251.00">6</text><text x="2.5" y="260.00">0</text><text x="2.5" y="289.00">7</text><text x="2.5" y="298.00">0</text><text x="2.5" y="327.00">8</text><text x="2.5" y="336.00">0</text><text x="2.5" y="365.00">9</text><text x="2.5" y="374.00">0</text><text x="2.5" y="394.00">1</text><text x="2.5" y="403.00">0</text><text x="2.5" y="412.00">0</text><text x="2.5" y="432.00">1</text><text x="2.5" y="441.00">1</text><text x="2.5" y="450.00">0</text><text x="2.5" y="470.00">1</text><text x="2.5" y="479.00">2</text><text x="2.5" y="488.00">0</text><text x="2.5" y="508.00">1</text><text x="2.5" y="517.00">3</text><text x="2.5" y="526.00">0</text><text x="2.5" y="546.00">1</text><text x="2.5" y="555.00">4</text><text x="2.5" y="564.00">0</text><text x="2.5" y="584.00">1</text><text x="2.5" y="593.00">5</text><text x="2.5" y="602.00">0</text><text x="2.5" y="622.00">1</text><text x="2.5" y="631.00">6</text><text x="2.5" y="640.00">0</text><text x="2.5" y="660.00">1</text><text x="2.5" y="669.00">7</text><text x="2.5" y="678.00">0</text><text x="2.5" y="698.00">1</text><text x="2.5" y="707.00">8</text><text x="2.5" y="716.00">0</text><text x="2.5" y="736.00">1</text><text x="2.5" y="745.00">9</text><text x="2.5" y="754.00">0</text></g><path d="M1 6 H11 M6 1 V12" stroke="#8a8a8a" stroke-width="1"/></svg>
<div id="canvas" class="a"></div>
<div id="artboard" class="a"></div>
<svg class="a" style="left:0;top:0" width="1600" height="879">
  <rect x="349.8" y="271.9" width="586.3" height="528.3" fill="none" stroke="#ee1a10" stroke-width="3.5"/>
  <g stroke="#1c1c1c" stroke-width="2" fill="none" stroke-linecap="round">
    <path d="M405.4 366.1 L600.4 477.9 L795.7 366.1"/>
    <path d="M405.4 396.5 L600.4 508.2 L795.7 396.5"/>
    <path d="M405.4 427.1 L600.4 538.7 L795.7 427.1"/>
    <path d="M569.9 509.2 V733.5 M600.4 508.2 V733.5 M630.9 509.2 V733.5"/>
  </g>
</svg>

<div class="a" style="left:1281px;top:73px;width:20px;height:806px;background:#4a4a4a"></div>
<div class="a" style="left:1281px;top:73px;width:20px;height:32px;background:#505050"></div>
<div class="a" style="left:1299px;top:73px;width:2px;height:806px;background:#2f2f2f"></div>
<svg class="a" style="left:1284px;top:111px" width="13" height="9" viewBox="0 0 13 9"><path d="M2.5 7 L6.5 3 L10.5 7" stroke="#c8c8c8" stroke-width="1.5" fill="none"/></svg>
<div class="a" style="left:1282px;top:548px;width:17px;height:28px;background:#5a5a5a;border-radius:8px"></div>

<div class="a" style="left:1117px;top:49px;width:120px;height:60px;background:#535353;box-shadow:0 0 0 1px #404040">
  <div class="a" style="left:0;top:0;width:120px;height:15px;background:#434343"></div>
  <svg class="a" style="left:0;top:0" width="120" height="60">
    <path d="M85.5 5.5 L88 8 L85.5 10.5 M89.5 5.5 L92 8 L89.5 10.5" stroke="#dcdcdc" stroke-width="1.1" fill="none"/>
    <path d="M105.5 4.5 L112.5 11.5 M112.5 4.5 L105.5 11.5" stroke="#e6e6e6" stroke-width="1.6"/>
    <g fill="#3e3e3e"><rect x="49" y="18" width="1" height="5"/><rect x="51" y="18" width="1" height="5"/><rect x="53" y="18" width="1" height="5"/><rect x="55" y="18" width="1" height="5"/><rect x="57" y="18" width="1" height="5"/><rect x="59" y="18" width="1" height="5"/><rect x="61" y="18" width="1" height="5"/><rect x="63" y="18" width="1" height="5"/><rect x="65" y="18" width="1" height="5"/><rect x="67" y="18" width="1" height="5"/></g>
    <g transform="translate(13,31)">
      <path d="M7 1 L13 4 L13 10 L7 13 L1 10 L1 4 Z" fill="none" stroke="#cfcfcf" stroke-width="1.4"/>
      <path d="M1 4 L7 7 L13 4 M7 7 V13" fill="none" stroke="#cfcfcf" stroke-width="1.2"/>
      <rect x="16" y="1" width="4" height="4" fill="#cfcfcf"/><rect x="16" y="8" width="4" height="4" fill="#cfcfcf"/>
      <rect x="0" y="16" width="21" height="4" fill="#cfcfcf"/>
    </g>
  </svg>
  <div class="a" style="left:44px;top:33px;font-size:14px;color:#e8e8e8;white-space:nowrap">属性</div>
</div>
<div class="a" style="left:1237px;top:62px;width:43px;height:122px;background:#535353;box-shadow:0 0 0 1px #404040">
  <div class="a" style="left:0;top:0;width:43px;height:13px;background:#434343"></div>
  <svg class="a" style="left:0;top:0" width="44" height="122">
    <path d="M9.5 4.5 L12 7 L9.5 9.5 M13.5 4.5 L16 7 L13.5 9.5" stroke="#dcdcdc" stroke-width="1.1" fill="none"/>
    <path d="M29.5 3.5 L36.5 10.5 M36.5 3.5 L29.5 10.5" stroke="#e6e6e6" stroke-width="1.6"/>
    <g fill="#3e3e3e"><rect x="13" y="18" width="1" height="5"/><rect x="15" y="18" width="1" height="5"/><rect x="17" y="18" width="1" height="5"/><rect x="19" y="18" width="1" height="5"/><rect x="21" y="18" width="1" height="5"/><rect x="23" y="18" width="1" height="5"/><rect x="25" y="18" width="1" height="5"/><rect x="27" y="18" width="1" height="5"/><rect x="29" y="18" width="1" height="5"/></g>
    <path d="M15 47.5 L21.5 33 L28 47.5 M17.5 42.5 H25.5" stroke="#d8d8d8" stroke-width="2.4" fill="none"/>
    <rect x="30.5" y="30" width="1.4" height="20" fill="#d4d4d4"/>
    <rect x="4" y="58" width="36" height="1" fill="#505050"/>
    <path d="M20.5 65.5 H27.5 M22 66 V82 M26.5 66 V82" stroke="#d4d4d4" stroke-width="2" fill="none"/>
    <path d="M21 66 A4.3 4.5 0 0 0 21 75 Z" fill="#d4d4d4"/>
    <rect x="4" y="89" width="36" height="1" fill="#505050"/>
    <text transform="translate(13.5,113) scale(0.78,1)" font-family="Liberation Serif, serif" font-style="italic" font-size="25" fill="#cfcfcf" stroke="#cfcfcf" stroke-width="0.4">O</text>
  </svg>
</div>


<svg class="a" style="left:1301px;top:73px" width="47" height="806">
  <rect x="0" y="0" width="47" height="806" fill="#535353"/>
  <rect x="44" y="0" width="3" height="806" fill="#464646"/>
  <rect x="0" y="0" width="47" height="12" fill="#434343"/><path d="M34.5 3.5 L32 6 L34.5 8.5 M38.5 3.5 L36 6 L38.5 8.5" stroke="#dcdcdc" stroke-width="1.1" fill="none"/>
  <g fill="#3e3e3e"><rect x="12" y="16" width="1" height="5"/><rect x="14" y="16" width="1" height="5"/><rect x="16" y="16" width="1" height="5"/><rect x="18" y="16" width="1" height="5"/><rect x="20" y="16" width="1" height="5"/><rect x="22" y="16" width="1" height="5"/><rect x="24" y="16" width="1" height="5"/><rect x="26" y="16" width="1" height="5"/><rect x="28" y="16" width="1" height="5"/><rect x="30" y="16" width="1" height="5"/><rect x="32" y="16" width="1" height="5"/></g>
  <g transform="translate(24,40.5)"><circle r="7.8" fill="#d2d2d2"/><path d="M7.00 0.00 L10.80 0.00" stroke="#d2d2d2" stroke-width="1.8"/><path d="M4.95 4.95 L7.64 7.64" stroke="#d2d2d2" stroke-width="1.8"/><path d="M0.00 7.00 L0.00 10.80" stroke="#d2d2d2" stroke-width="1.8"/><path d="M-4.95 4.95 L-7.64 7.64" stroke="#d2d2d2" stroke-width="1.8"/><path d="M-7.00 0.00 L-10.80 0.00" stroke="#d2d2d2" stroke-width="1.8"/><path d="M-4.95 -4.95 L-7.64 -7.64" stroke="#d2d2d2" stroke-width="1.8"/><path d="M-0.00 -7.00 L-0.00 -10.80" stroke="#d2d2d2" stroke-width="1.8"/><path d="M4.95 -4.95 L7.64 -7.64" stroke="#d2d2d2" stroke-width="1.8"/><circle cx="3.88" cy="1.61" r="1.1" fill="#535353"/><circle cx="1.61" cy="3.88" r="1.1" fill="#535353"/><circle cx="-1.61" cy="3.88" r="1.1" fill="#535353"/><circle cx="-3.88" cy="1.61" r="1.1" fill="#535353"/><circle cx="-3.88" cy="-1.61" r="1.1" fill="#535353"/><circle cx="-1.61" cy="-3.88" r="1.1" fill="#535353"/><circle cx="1.61" cy="-3.88" r="1.1" fill="#535353"/><circle cx="3.88" cy="-1.61" r="1.1" fill="#535353"/><circle r="1.4" fill="#535353"/></g>
  <circle cx="24" cy="71" r="10" fill="#d2d2d2"/>
  <rect x="23" y="69" width="3" height="7" fill="#535353"/><rect x="21" y="75" width="6" height="1.6" fill="#535353"/><rect x="21.5" y="69" width="3" height="1.5" fill="#535353"/>
  <circle cx="24.5" cy="65.5" r="1.6" fill="#535353"/>
  <rect x="2" y="90" width="41" height="1" fill="#454545"/>
  <g fill="#3e3e3e"><rect x="12" y="96" width="1" height="5"/><rect x="14" y="96" width="1" height="5"/><rect x="16" y="96" width="1" height="5"/><rect x="18" y="96" width="1" height="5"/><rect x="20" y="96" width="1" height="5"/><rect x="22" y="96" width="1" height="5"/><rect x="24" y="96" width="1" height="5"/><rect x="26" y="96" width="1" height="5"/><rect x="28" y="96" width="1" height="5"/><rect x="30" y="96" width="1" height="5"/><rect x="32" y="96" width="1" height="5"/></g>
  <circle cx="24" cy="116.5" r="7.5" fill="#d2d2d2"/>
  <circle cx="24" cy="116.5" r="10" fill="none" stroke="#d2d2d2" stroke-width="1.4" stroke-dasharray="2 2"/>
  <rect x="2" y="166" width="41" height="1" fill="#454545"/>
  <g transform="translate(14,139)" fill="none" stroke="#d2d2d2" stroke-width="1.5">
    <rect x="6.5" y="0.5" width="13" height="13"/>
    <rect x="0.5" y="10.5" width="6" height="6"/><rect x="3.5" y="13.5" width="6" height="6"/>
  </g>
  <g fill="#3e3e3e"><rect x="12" y="173" width="1" height="5"/><rect x="14" y="173" width="1" height="5"/><rect x="16" y="173" width="1" height="5"/><rect x="18" y="173" width="1" height="5"/><rect x="20" y="173" width="1" height="5"/><rect x="22" y="173" width="1" height="5"/><rect x="24" y="173" width="1" height="5"/><rect x="26" y="173" width="1" height="5"/><rect x="28" y="173" width="1" height="5"/><rect x="30" y="173" width="1" height="5"/><rect x="32" y="173" width="1" height="5"/></g>
  <defs><linearGradient id="sg" x1="0" x2="1"><stop offset="0" stop-color="#222"/><stop offset="1" stop-color="#ddd"/></linearGradient></defs>
  <rect x="15" y="188.5" width="19" height="13" fill="url(#sg)" stroke="#d2d2d2" stroke-width="1.4"/>
  <circle cx="21.5" cy="223" r="6.5" fill="#d2d2d2"/><circle cx="26" cy="227.5" r="7" fill="#707070" stroke="#d2d2d2" stroke-width="1.4"/>
  <rect x="2" y="245" width="41" height="1" fill="#454545"/>
  <g fill="#3e3e3e"><rect x="12" y="250" width="1" height="5"/><rect x="14" y="250" width="1" height="5"/><rect x="16" y="250" width="1" height="5"/><rect x="18" y="250" width="1" height="5"/><rect x="20" y="250" width="1" height="5"/><rect x="22" y="250" width="1" height="5"/><rect x="24" y="250" width="1" height="5"/><rect x="26" y="250" width="1" height="5"/><rect x="28" y="250" width="1" height="5"/><rect x="30" y="250" width="1" height="5"/><rect x="32" y="250" width="1" height="5"/></g>
  <g transform="translate(15,263)" fill="none" stroke="#d2d2d2" stroke-width="1.5">
    <rect x="2.5" y="2.5" width="13" height="13" stroke-dasharray="2 1.5"/>
    <rect x="0" y="0" width="4" height="4" fill="#d2d2d2" stroke="none"/><rect x="14" y="0" width="4" height="4" fill="#d2d2d2" stroke="none"/>
    <rect x="0" y="14" width="4" height="4" fill="#d2d2d2" stroke="none"/><rect x="14" y="14" width="4" height="4" fill="#d2d2d2" stroke="none"/>
    <circle cx="9" cy="9" r="0.8" fill="#d2d2d2"/>
  </g>
  <g transform="translate(15,294)" fill="#d2d2d2">
    <rect x="0" y="0" width="1.4" height="19"/><rect x="3" y="3" width="9" height="5"/><rect x="3" y="10" width="15" height="6"/>
  </g>
  <g transform="translate(15,326)" fill="#d2d2d2">
    <rect x="0" y="0" width="10" height="10"/><rect x="6" y="6" width="12" height="12" fill="#d2d2d2"/><rect x="6" y="6" width="4" height="4" fill="#535353"/>
  </g>
  <rect x="2" y="354" width="41" height="1" fill="#454545"/>
  <g fill="#3e3e3e"><rect x="12" y="358" width="1" height="5"/><rect x="14" y="358" width="1" height="5"/><rect x="16" y="358" width="1" height="5"/><rect x="18" y="358" width="1" height="5"/><rect x="20" y="358" width="1" height="5"/><rect x="22" y="358" width="1" height="5"/><rect x="24" y="358" width="1" height="5"/><rect x="26" y="358" width="1" height="5"/><rect x="28" y="358" width="1" height="5"/><rect x="30" y="358" width="1" height="5"/><rect x="32" y="358" width="1" height="5"/></g>
  <g transform="translate(14,370)" fill="none" stroke="#d2d2d2" stroke-width="1.8">
    <path d="M9 2.5 H2 V20 H19.5 V13"/><path d="M11 2 H20 V11 M20 2 L11 11"/>
  </g>
  <rect x="2" y="401" width="41" height="1" fill="#454545"/>
</svg>


<svg class="a" style="left:1348px;top:73px" width="252" height="806" font-family="Liberation Sans, sans-serif">
  <defs>
    <linearGradient id="hue" x1="0" x2="1">
      <stop offset="0" stop-color="#ff0000"/><stop offset="0.17" stop-color="#ffff00"/><stop offset="0.33" stop-color="#00ff00"/>
      <stop offset="0.5" stop-color="#00ffff"/><stop offset="0.67" stop-color="#0000ff"/><stop offset="0.83" stop-color="#ff00ff"/><stop offset="1" stop-color="#ff0000"/>
    </linearGradient>
    <linearGradient id="wb" x1="0" x2="0" y1="0" y2="1">
      <stop offset="0" stop-color="#fff" stop-opacity="1"/><stop offset="0.5" stop-color="#fff" stop-opacity="0"/>
      <stop offset="0.5" stop-color="#000" stop-opacity="0"/><stop offset="1" stop-color="#000" stop-opacity="1"/>
    </linearGradient>
    <linearGradient id="gg1" x1="0" x2="1"><stop offset="0" stop-color="#fff"/><stop offset="1" stop-color="#111"/></linearGradient>
    <linearGradient id="gg2" x1="0" x2="1"><stop offset="0" stop-color="#fff100"/><stop offset="1" stop-color="#e95513"/></linearGradient>
    <linearGradient id="gg3" x1="0" x2="1"><stop offset="0" stop-color="#1d88d8"/><stop offset="1" stop-color="#e8f0f8"/></linearGradient>
    <filter id="bl" x="-10%" y="-50%" width="120%" height="200%"><feGaussianBlur stdDeviation="1.2"/></filter><linearGradient id="bristle" x1="0" x2="0" y1="0" y2="1"><stop offset="0" stop-color="#aaa"/><stop offset="0.5" stop-color="#555"/><stop offset="1" stop-color="#aaa"/></linearGradient>
  </defs>
  <rect x="0" y="0" width="252" height="806" fill="#535353"/>
  <rect x="0" y="0" width="1" height="806" fill="#3c3c3c"/>
  <rect x="0" y="0" width="252" height="13" fill="#434343"/>
  
  <!-- color panel -->
  <rect x="0" y="13" width="252" height="30" fill="#444444"/><rect x="1" y="14" width="53" height="29" fill="#535353"/>
  <path d="M5 30 L7.5 27 L10 30 M5 33 L7.5 36 L10 33" stroke="#bdbdbd" stroke-width="1.3" fill="none"/>
  <rect x="6" y="54" width="15" height="14" fill="#fff"/><path d="M7 67 L20 55" stroke="#e60012" stroke-width="2"/>
  <rect x="20" y="54" width="15" height="14" fill="#000"/>
  <rect x="35" y="54" width="14" height="14" fill="#fff"/>
  <text x="189" y="66" font-size="11" fill="#bdbdbd">#</text>
  <rect x="203" y="52" width="46" height="19" fill="#474747"/>
  <text x="206" y="66" font-size="12.5" fill="#f0f0f0" font-family="Liberation Serif, serif" textLength="40" lengthAdjust="spacingAndGlyphs">FFFFFF</text>
  <rect x="7" y="81" width="243" height="138" fill="url(#hue)"/>
  <rect x="7" y="81" width="243" height="138" fill="url(#wb)"/>
  <rect x="0" y="227" width="252" height="3" fill="#3c3c3c"/>
  <g fill="#8a8a8a"><rect x="249" y="26" width="3" height="1"/><rect x="249" y="29" width="3" height="1"/><rect x="249" y="32" width="3" height="1"/></g>
  <!-- swatches panel -->
  <rect x="0" y="229" width="252" height="30" fill="#444444"/><rect x="1" y="230" width="46" height="29" fill="#535353"/><rect x="47" y="231" width="46" height="28" fill="#4b4b4b"/>
  <rect x="6" y="268" width="20" height="20" fill="#fff"/><path d="M7 287 L25 269" stroke="#e60012" stroke-width="2"/>
  <rect x="17.5" y="278.5" width="21" height="21" fill="#231815" stroke="#e8e8e8" stroke-width="1"/>
  <rect x="22.5" y="283.5" width="11" height="11" fill="#535353" stroke="#e8e8e8" stroke-width="1"/>
  <rect x="6" y="268" width="20" height="20" fill="#fff"/><path d="M7 287 L25 269" stroke="#e60012" stroke-width="2"/>
  <rect x="208" y="269" width="28" height="24" fill="#4e4e4e"/>
  <g fill="#dcdcdc"><rect x="215" y="273" width="14" height="2"/><rect x="215" y="277" width="14" height="2"/><rect x="215" y="281" width="14" height="2"/><rect x="215" y="285" width="14" height="2"/></g>
  <rect x="237" y="269" width="15" height="24" fill="#303030"/>
  <g fill="#f0f0f0"><rect x="241" y="273" width="5" height="5"/><rect x="247" y="273" width="5" height="5"/><rect x="241" y="279" width="5" height="5"/><rect x="247" y="279" width="5" height="5"/><rect x="241" y="285" width="5" height="4"/><rect x="247" y="285" width="5" height="4"/></g>
  <rect x="6.0" y="307" width="14.5" height="14.5" fill="#fff" stroke="#333" stroke-width="1"/><path d="M8.0 319.5 L18.5 309" stroke="#e60012" stroke-width="2"/><rect x="21.670000000000073" y="307" width="14.5" height="14.5" fill="#f4f4f4"/><circle cx="28.920000000000073" cy="314.25" r="4.5" fill="none" stroke="#888" stroke-width="0.9"/><circle cx="28.920000000000073" cy="314.25" r="1.8" fill="none" stroke="#888" stroke-width="0.9"/><path d="M23.170000000000073 314.25 H34.67000000000007 M28.920000000000073 308.5 V320.0" stroke="#888" stroke-width="0.8"/><rect x="37.33999999999992" y="307" width="14.5" height="14.5" fill="#ffffff"/><rect x="53.00999999999999" y="307" width="14.5" height="14.5" fill="#231815"/><rect x="68.68000000000006" y="307" width="14.5" height="14.5" fill="#e60012"/><rect x="84.34999999999991" y="307" width="14.5" height="14.5" fill="#fff100"/><rect x="100.01999999999998" y="307" width="14.5" height="14.5" fill="#009944"/><rect x="115.69000000000005" y="307" width="14.5" height="14.5" fill="#00a0e9"/><rect x="131.3599999999999" y="307" width="14.5" height="14.5" fill="#1d2088"/><rect x="147.02999999999997" y="307" width="14.5" height="14.5" fill="#e4007f"/><rect x="162.70000000000005" y="307" width="14.5" height="14.5" fill="#c9161d"/><rect x="178.3699999999999" y="307" width="14.5" height="14.5" fill="#e94828"/><rect x="194.03999999999996" y="307" width="14.5" height="14.5" fill="#eb6100"/><rect x="209.71000000000004" y="307" width="14.5" height="14.5" fill="#f39800"/><rect x="225.3800000000001" y="307" width="14.5" height="14.5" fill="#f8b62d"/><rect x="6.0" y="323" width="14.5" height="14.5" fill="#fff100"/><rect x="21.670000000000073" y="323" width="14.5" height="14.5" fill="#dfe21e"/><rect x="37.33999999999992" y="323" width="14.5" height="14.5" fill="#8fc31f"/><rect x="53.00999999999999" y="323" width="14.5" height="14.5" fill="#22ac38"/><rect x="68.68000000000006" y="323" width="14.5" height="14.5" fill="#009944"/><rect x="84.34999999999991" y="323" width="14.5" height="14.5" fill="#007b43"/><rect x="100.01999999999998" y="323" width="14.5" height="14.5" fill="#00a968"/><rect x="115.69000000000005" y="323" width="14.5" height="14.5" fill="#00a29a"/><rect x="131.3599999999999" y="323" width="14.5" height="14.5" fill="#2ca6e0"/><rect x="147.02999999999997" y="323" width="14.5" height="14.5" fill="#0075c2"/><rect x="162.70000000000005" y="323" width="14.5" height="14.5" fill="#1d2f8d"/><rect x="178.3699999999999" y="323" width="14.5" height="14.5" fill="#172068"/><rect x="194.03999999999996" y="323" width="14.5" height="14.5" fill="#601986"/><rect x="209.71000000000004" y="323" width="14.5" height="14.5" fill="#920783"/><rect x="225.3800000000001" y="323" width="14.5" height="14.5" fill="#b5006e"/><rect x="6.0" y="338.7" width="14.5" height="14.5" fill="#e4005a"/><rect x="21.670000000000073" y="338.7" width="14.5" height="14.5" fill="#e5007f"/><rect x="37.33999999999992" y="338.7" width="14.5" height="14.5" fill="#c8b495"/><rect x="53.00999999999999" y="338.7" width="14.5" height="14.5" fill="#a48b78"/><rect x="68.68000000000006" y="338.7" width="14.5" height="14.5" fill="#8c7767"/><rect x="84.34999999999991" y="338.7" width="14.5" height="14.5" fill="#6a5648"/><rect x="100.01999999999998" y="338.7" width="14.5" height="14.5" fill="#c49a6c"/><rect x="115.69000000000005" y="338.7" width="14.5" height="14.5" fill="#bd8c5a"/><rect x="131.3599999999999" y="338.7" width="14.5" height="14.5" fill="#a0683a"/><rect x="147.02999999999997" y="338.7" width="14.5" height="14.5" fill="#955d2d"/><rect x="162.70000000000005" y="338.7" width="14.5" height="14.5" fill="#7d4a1e"/><rect x="178.3699999999999" y="338.7" width="14.5" height="14.5" fill="#4f3013"/><rect x="194.03999999999996" y="338.7" width="14.5" height="14.5" fill="url(#gg1)"/><rect x="209.71000000000004" y="338.7" width="14.5" height="14.5" fill="url(#gg2)"/><rect x="225.3800000000001" y="338.7" width="14.5" height="14.5" fill="url(#gg3)"/><rect x="6" y="354.7" width="14.5" height="14.5" fill="#231815"/><circle cx="13.25" cy="361.95" r="5.2" fill="#e8e8e8"/><rect x="21.67" y="354.7" width="14.5" height="14.5" fill="#d6efc4"/><rect x="24.67" y="357.7" width="8" height="8" fill="#3aab2a"/><circle cx="28.67" cy="361.7" r="2.5" fill="#7ac64e"/><rect x="37.34" y="354.7" width="14.5" height="14.5" fill="#c89a6c"/><path d="M39.34 357.7 h3 v2 h-3z M45.34 360.7 h3 v3 h-3z M40.34 364.7 h3 v2 h-3z" fill="#f0e0c8"/><path d="M7 376.6 H12 L13.5 378.1 H20 V385.6 H7 Z" fill="#bdbdbd"/><rect x="7" y="379.1" width="13" height="1" fill="#8c8c8c"/><rect x="21.670000000000073" y="372.6" width="14.5" height="14.5" fill="#231815"/><rect x="37.33999999999992" y="372.6" width="14.5" height="14.5" fill="#3e3a39"/><rect x="53.00999999999999" y="372.6" width="14.5" height="14.5" fill="#595757"/><rect x="68.68000000000006" y="372.6" width="14.5" height="14.5" fill="#7d7d7d"/><rect x="84.34999999999991" y="372.6" width="14.5" height="14.5" fill="#8d8d8d"/><rect x="100.01999999999998" y="372.6" width="14.5" height="14.5" fill="#9fa0a0"/><rect x="115.69000000000005" y="372.6" width="14.5" height="14.5" fill="#b5b5b6"/><rect x="131.3599999999999" y="372.6" width="14.5" height="14.5" fill="#c9caca"/><rect x="147.02999999999997" y="372.6" width="14.5" height="14.5" fill="#dcdddd"/><rect x="162.70000000000005" y="372.6" width="14.5" height="14.5" fill="#efefef"/><rect x="178.3699999999999" y="372.6" width="14.5" height="14.5" fill="#f7f8f8"/><path d="M7 394.6 H12 L13.5 396.1 H20 V403.6 H7 Z" fill="#bdbdbd"/><rect x="7" y="397.1" width="13" height="1" fill="#8c8c8c"/><rect x="21.670000000000073" y="390.6" width="14.5" height="14.5" fill="#e60012"/><rect x="37.33999999999992" y="390.6" width="14.5" height="14.5" fill="#eb6100"/><rect x="53.00999999999999" y="390.6" width="14.5" height="14.5" fill="#fff100"/><rect x="68.68000000000006" y="390.6" width="14.5" height="14.5" fill="#009944"/><rect x="84.34999999999991" y="390.6" width="14.5" height="14.5" fill="#0068b7"/><rect x="100.01999999999998" y="390.6" width="14.5" height="14.5" fill="#920783"/>
  <g fill="#c8c8c8" transform="translate(0,425)">
    <rect x="11" y="1" width="2" height="11"/><rect x="14" y="1" width="2" height="11"/><path d="M17 1 L19 1 L23 12 L21 12 Z"/><rect x="24" y="10" width="3" height="2"/>
    <circle cx="47" cy="7" r="3.5" fill="none" stroke="#c8c8c8" stroke-width="1.4"/><circle cx="52" cy="2" r="1.5"/><circle cx="52" cy="12" r="1.5"/>
    <path d="M70 12 C66 12 66 7 70 7 C71 3 77 2 79 6 C83 5 85 8 84 12 Z"/><path d="M66 9 H72 M70 7 L72 9 L70 11" stroke="#c8c8c8" stroke-width="1.3" fill="none"/>
    <rect x="107" y="0" width="13" height="12"/><g fill="#535353"><rect x="109" y="2" width="3" height="2"/><rect x="114" y="2" width="3" height="2"/><rect x="109" y="6" width="3" height="2"/><rect x="114" y="6" width="3" height="2"/></g><rect x="122" y="10" width="2" height="2"/>
    <rect x="137.5" y="0.5" width="12" height="12" fill="none" stroke="#6a6a6a"/>
    <path d="M166 2 H171 L172.5 3.5 H181 V13 H166 Z"/>
    <rect x="197" y="1" width="12" height="11" fill="#6a6a6a"/>
    <path d="M227 2 H237 M229 3 V13 H235 V3" stroke="#6a6a6a" stroke-width="1.3" fill="none"/>
  </g>
  <rect x="0" y="442" width="252" height="3" fill="#3c3c3c"/>
  <g fill="#8a8a8a"><rect x="249" y="242" width="3" height="1"/><rect x="249" y="245" width="3" height="1"/><rect x="249" y="248" width="3" height="1"/></g>
  <!-- color guide -->
  <rect x="0" y="445" width="252" height="30" fill="#444444"/><rect x="1" y="446" width="80" height="29" fill="#535353"/>
  <path d="M5 462 L7.5 459 L10 462 M5 465 L7.5 468 L10 465" stroke="#bdbdbd" stroke-width="1.3" fill="none"/>
  <rect x="5.5" y="485.5" width="22" height="22" fill="#000" stroke="#fff" stroke-width="1"/><rect x="9" y="489" width="15" height="15" fill="#fff"/>
  <rect x="35" y="483" width="121" height="28" fill="#4a4a4a"/>
  <rect x="39" y="488" width="17" height="19" fill="#fff" stroke="#222" stroke-width="0.8"/>
  <rect x="56" y="488" width="19" height="19" fill="#baa9a9"/>
  <rect x="75" y="488" width="17" height="19" fill="#b6b19f"/>
  <rect x="92" y="488" width="19" height="19" fill="#b8f0cb"/>
  <rect x="111" y="488" width="18" height="19" fill="#9d97c2"/>
  <rect x="157" y="483" width="18" height="28" fill="#4c4c4c"/>
  <path d="M162 495 L166 499 L170 495" stroke="#e0e0e0" stroke-width="1.6" fill="none"/>
  <circle cx="198" cy="498" r="8.5" fill="#bdbdbd"/><circle cx="198" cy="498" r="3" fill="#535353"/><path d="M198 490 V506 M190 498 H206 M192 492 L204 504" stroke="#8a8a8a" stroke-width="1"/>
  <path d="M219 491 H231 V504 H221 V497 M225 491 V504 M221 497 H231" stroke="#c8c8c8" stroke-width="1.4" fill="none"/><path d="M214 501 H220 M217 498 V504" stroke="#c8c8c8" stroke-width="1.6"/>
  <rect x="0" y="523" width="252" height="3" fill="#3c3c3c"/>
  <g fill="#8a8a8a"><rect x="249" y="458" width="3" height="1"/><rect x="249" y="461" width="3" height="1"/><rect x="249" y="464" width="3" height="1"/></g>
  <!-- brushes -->
  <rect x="0" y="526" width="252" height="30" fill="#444444"/><rect x="1" y="527" width="46" height="29" fill="#535353"/><rect x="47" y="528" width="47" height="28" fill="#4b4b4b"/><rect x="94" y="528" width="49" height="28" fill="#4b4b4b"/>
  <rect x="6" y="564" width="222" height="37" fill="#e4e4e4"/>
  <g fill="#808080"><rect x="42" y="564" width="1" height="37"/><rect x="79" y="564" width="1" height="37"/><rect x="116" y="564" width="1" height="37"/><rect x="153" y="564" width="1" height="37"/><rect x="190" y="564" width="1" height="37"/></g>
  <rect x="228" y="564" width="19" height="37" fill="#4a4a4a"/><rect x="247" y="564" width="5" height="153" fill="#4e4e4e"/><rect x="247" y="564" width="1" height="153" fill="#444"/>
  <circle cx="24" cy="583" r="2.6" fill="#000"/>
  <circle cx="61.5" cy="583" r="8.5" fill="#000"/>
  <ellipse cx="98.5" cy="583" rx="2" ry="1.2" fill="#000"/>
  <ellipse cx="135.5" cy="583" rx="3" ry="2" fill="#000"/>
  <ellipse cx="172" cy="583" rx="1" ry="2" fill="#ccc"/>
  <circle cx="209.5" cy="583" r="7" fill="#000"/>
  <rect x="6" y="602" width="241" height="35" fill="#e4e4e4"/>
  <rect x="11" y="618" width="198" height="3" fill="#000"/>
  <text x="215" y="626" font-size="13" fill="#222">基本</text>
  <rect x="6" y="637" width="241" height="2" fill="#9a9a9a"/>
  <rect x="6" y="639" width="241" height="36" fill="#e4e4e4"/>
  <path d="M15 648 H32 V675 H15 Z M32 648 H119 V665 H32 Z M119 639 H144 V665 H119 Z" fill="#2b3052"/>
  <g fill="#b8a868" opacity="0.55"><rect x="17" y="652" width="124" height="1"/><rect x="17" y="657" width="124" height="1"/><rect x="17" y="661" width="124" height="1"/><rect x="20" y="652" width="1" height="20"/><rect x="137" y="642" width="1" height="20"/></g>
  <g fill="#e4e4e4"><rect x="42" y="648" width="1" height="17"/><rect x="79" y="648" width="1" height="17"/><rect x="116" y="648" width="1" height="17"/></g>
  <g fill="#222"><rect x="42" y="639" width="1" height="3"/><rect x="79" y="639" width="1" height="3"/><rect x="116" y="639" width="1" height="3"/><rect x="153" y="639" width="1" height="3"/><rect x="190" y="639" width="1" height="3"/>
  <rect x="42" y="672" width="1" height="3"/><rect x="79" y="672" width="1" height="3"/><rect x="116" y="672" width="1" height="3"/><rect x="153" y="672" width="1" height="3"/><rect x="190" y="672" width="1" height="3"/></g>
  <rect x="6" y="675" width="241" height="2" fill="#9a9a9a"/>
  <rect x="6" y="677" width="241" height="34" fill="#e4e4e4"/>
  <rect x="15" y="689" width="5" height="7" fill="#222"/><path d="M20 689 L27 684 C30 688 30 697 27 701 L20 696 Z" fill="none" stroke="#222" stroke-width="1.8"/>
  <text x="41" y="700" font-size="13" fill="#222" stroke="#222" stroke-width="0.35" font-family="Liberation Serif, serif">6. 00</text>
  <g filter="url(#bl)"><path d="M104 694 C122 686 140 686 158 694 C176 702 200 704 222 693" stroke="#555" stroke-width="7" fill="none" stroke-linecap="round" opacity="0.8"/></g>
  <rect x="6" y="711" width="241" height="2" fill="#9a9a9a"/>
  <rect x="6" y="713" width="241" height="4" fill="#e4e4e4"/>
  <g fill="#c8c8c8" transform="translate(0,723)">
    <rect x="11" y="1" width="2" height="11"/><rect x="14" y="1" width="2" height="11"/><path d="M17 1 L19 1 L23 12 L21 12 Z"/><rect x="24" y="10" width="3" height="2"/>
    <path d="M38 1 H43 L44.5 2.5 H50 V7 H38 Z"/><circle cx="49" cy="10" r="4.5" fill="none" stroke="#c8c8c8" stroke-width="1.3"/><circle cx="46" cy="10" r="3" fill="none" stroke="#c8c8c8" stroke-width="1.1"/>
    <path d="M137 1 L146 12 M146 1 L137 12" stroke="#6a6a6a" stroke-width="1.5"/>
    <rect x="166.5" y="1.5" width="12" height="11" fill="none" stroke="#6a6a6a"/>
    <path d="M197 0 H209 V12 H199 V10 H197 Z"/>
    <path d="M227 2 H237 M229 3 V13 H235 V3" stroke="#6a6a6a" stroke-width="1.3" fill="none"/>
  </g>
  <rect x="0" y="740" width="252" height="3" fill="#3c3c3c"/>
  <g fill="#8a8a8a"><rect x="249" y="539" width="3" height="1"/><rect x="249" y="542" width="3" height="1"/><rect x="249" y="545" width="3" height="1"/></g>
  <!-- layers -->
  <rect x="0" y="743" width="252" height="31" fill="#444444"/><rect x="1" y="744" width="48" height="30" fill="#535353"/>
  <rect x="6" y="782" width="246" height="24" fill="#4a607c"/>
  <rect x="54" y="785" width="3" height="21" fill="#4a8cff"/>
  <path d="M67 789 L71 793 L67 797" stroke="#f0f0f0" stroke-width="1.5" fill="none"/>
  <rect x="88" y="783" width="20" height="21" fill="#fff" stroke="#222" stroke-width="1.2"/>
  <path d="M90 786 L98 791 L106 786 M90 788.5 L98 793.5 L106 788.5" stroke="#999" stroke-width="1" fill="none" stroke-dasharray="1.5 1"/><path d="M96 793 V803 M98 793 V803 M100 793 V803" stroke="#ccc" stroke-width="0.6"/>
  <text x="114" y="800" font-size="13" fill="#e8e8e8">图层</text>
  <text x="146" y="800" font-size="13" fill="#f0e0b0" font-family="Liberation Serif, serif">1</text>
  <circle cx="235" cy="793" r="4" fill="none" stroke="#e0e0e0" stroke-width="1.4"/>
  <path d="M12 789 C15 785 23 785 26 789 C23 793 15 793 12 789 Z" fill="none" stroke="#c8c8c8" stroke-width="1.4"/><circle cx="19" cy="789" r="2" fill="#c8c8c8"/>
  <ellipse cx="10" cy="797" rx="10" ry="10" fill="#d0d4d9"/>
  <ellipse cx="35" cy="800" rx="10" ry="9" fill="#d0d4d9"/>
</svg>

<div class="a" style="left:1365px;top:93px;font-size:14px;color:#e8e8e8;white-space:nowrap">颜色</div>
<div class="a" style="left:1358px;top:309px;font-size:14px;color:#e8e8e8;white-space:nowrap">色板</div>
<div class="a" style="left:1405px;top:309px;font-size:14px;color:#b8b8b8;white-space:nowrap">库</div>
<div class="a" style="left:1365px;top:525px;font-size:14px;color:#e8e8e8;white-space:nowrap">颜色参考</div>
<div class="a" style="left:1358px;top:606px;font-size:14px;color:#e8e8e8;white-space:nowrap">画笔</div>
<div class="a" style="left:1405px;top:606px;font-size:14px;color:#b8b8b8;white-space:nowrap">描边</div>
<div class="a" style="left:1453px;top:606px;font-size:14px;color:#b8b8b8;white-space:nowrap">符号</div>
<div class="a" style="left:1358px;top:823px;font-size:14px;color:#e8e8e8;white-space:nowrap">图层</div>

</body></html>
